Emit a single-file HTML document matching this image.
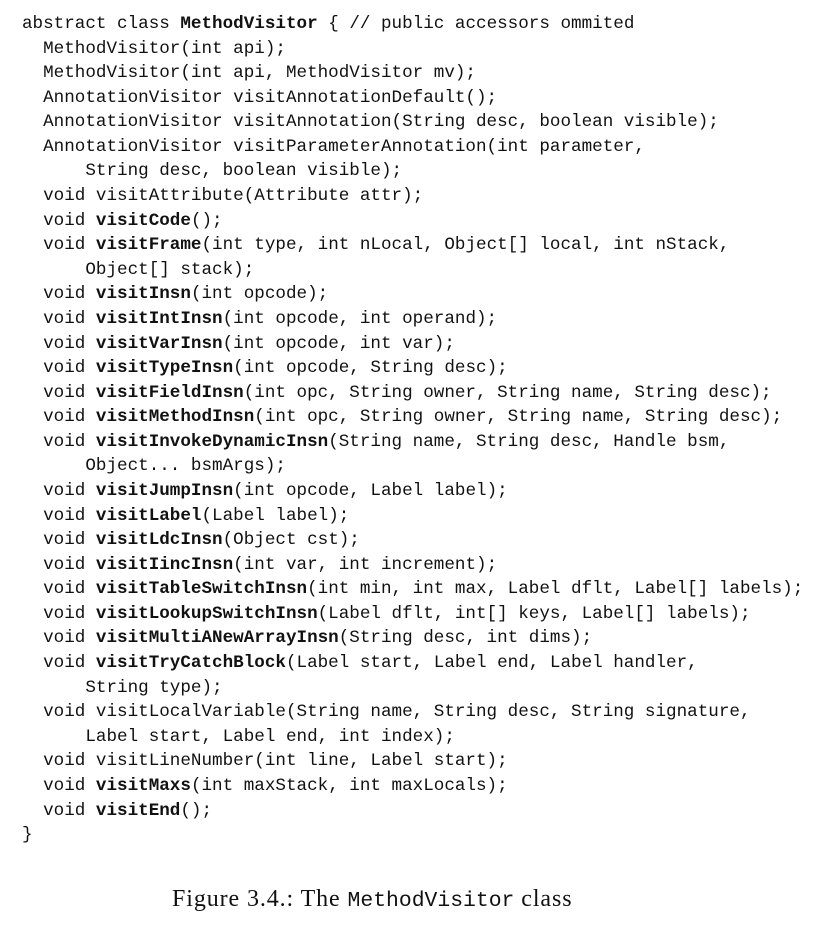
<!DOCTYPE html>
<html><head><meta charset="utf-8"><style>
html,body{margin:0;padding:0;background:#fff;width:838px;height:932px;overflow:hidden}
pre{position:absolute;left:22px;top:12px;margin:0;font-family:"Liberation Mono",monospace;font-size:17.6px;line-height:24.58px;color:#111}
b{font-weight:bold}
.cap{position:absolute;left:172px;top:886px;font-family:"Liberation Serif",serif;font-size:24px;letter-spacing:0.9px;color:#111;white-space:nowrap}
.cap span{font-family:"Liberation Mono",monospace;font-size:21.4px;letter-spacing:0}
</style></head><body>
<pre>abstract class <b>MethodVisitor</b> { // public accessors ommited
  MethodVisitor(int api);
  MethodVisitor(int api, MethodVisitor mv);
  AnnotationVisitor visitAnnotationDefault();
  AnnotationVisitor visitAnnotation(String desc, boolean visible);
  AnnotationVisitor visitParameterAnnotation(int parameter,
      String desc, boolean visible);
  void visitAttribute(Attribute attr);
  void <b>visitCode</b>();
  void <b>visitFrame</b>(int type, int nLocal, Object[] local, int nStack,
      Object[] stack);
  void <b>visitInsn</b>(int opcode);
  void <b>visitIntInsn</b>(int opcode, int operand);
  void <b>visitVarInsn</b>(int opcode, int var);
  void <b>visitTypeInsn</b>(int opcode, String desc);
  void <b>visitFieldInsn</b>(int opc, String owner, String name, String desc);
  void <b>visitMethodInsn</b>(int opc, String owner, String name, String desc);
  void <b>visitInvokeDynamicInsn</b>(String name, String desc, Handle bsm,
      Object... bsmArgs);
  void <b>visitJumpInsn</b>(int opcode, Label label);
  void <b>visitLabel</b>(Label label);
  void <b>visitLdcInsn</b>(Object cst);
  void <b>visitIincInsn</b>(int var, int increment);
  void <b>visitTableSwitchInsn</b>(int min, int max, Label dflt, Label[] labels);
  void <b>visitLookupSwitchInsn</b>(Label dflt, int[] keys, Label[] labels);
  void <b>visitMultiANewArrayInsn</b>(String desc, int dims);
  void <b>visitTryCatchBlock</b>(Label start, Label end, Label handler,
      String type);
  void visitLocalVariable(String name, String desc, String signature,
      Label start, Label end, int index);
  void visitLineNumber(int line, Label start);
  void <b>visitMaxs</b>(int maxStack, int maxLocals);
  void <b>visitEnd</b>();
}</pre>
<div class="cap">Figure 3.4.: The <span>MethodVisitor</span> class</div>
</body></html>
